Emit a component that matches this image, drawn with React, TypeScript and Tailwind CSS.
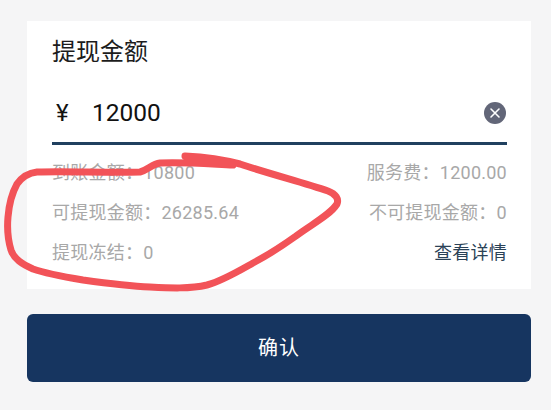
export default function App() {
  return (
    <div className="relative h-[410px] w-[551px] overflow-hidden bg-[#f5f5f6] pl-[27px] pr-[20px] pt-[21px] font-['Roboto','Noto_Sans_CJK_SC',sans-serif]">
      <section className="h-[268px] bg-white pl-[25px] pr-[24px] pt-[14px]">
        <h1 className="text-[24px] font-normal leading-[34px] text-[#1c1c1c]">提现金额</h1>
        <div className="mt-[15px] flex h-[61px] items-center border-b-[3px] border-[#20405f]">
          <span className="ml-[4px] w-[36px] text-[24px] leading-[34px] text-[#111]">¥</span>
          <span className="flex-1 text-[24.5px] leading-[34px] text-[#111]">12000</span>
          <span className="mr-[1px] flex h-[22px] w-[22px] items-center justify-center rounded-full bg-[#626678]">
            <svg width="12" height="12" viewBox="0 0 12 12" fill="none" stroke="white" strokeWidth="1.6" strokeLinecap="round">
              <path d="M2 2l8 8M10 2l-8 8" />
            </svg>
          </span>
        </div>
        <div className="mt-[7px] flex h-[40px] items-center justify-between text-[18px] tracking-[0.25px] text-[#a8a8a8]">
          <span>到账金额：10800</span>
          <span>服务费：1200.00</span>
        </div>
        <div className="flex h-[40px] items-center justify-between text-[18px] tracking-[0.25px] text-[#a8a8a8]">
          <span>可提现金额：26285.64</span>
          <span>不可提现金额：0</span>
        </div>
        <div className="flex h-[40px] items-center justify-between text-[18px] tracking-[0.25px] text-[#a8a8a8]">
          <span>提现冻结：0</span>
          <span className="text-[#2b4257]">查看详情</span>
        </div>
      </section>
      <button className="mt-[25px] flex h-[68px] w-full items-center justify-center rounded-[6px] bg-[#163560] text-[20px] tracking-[1px] text-white">
        确认
      </button>
      <svg className="absolute left-0 top-0" width="551" height="410" viewBox="0 0 551 410" fill="none">
        <path
          d="M185 156C205 157 225 160 240 164C270 174 305 183 328 191C336 194 339 199 337 204C330 215 312 224 296 236C282 246 268 255 253 263C237 272 222 281 207 285C190 289 170 288 150 287C128 286 105 283 83 280C65 277 47 274 33 269C22 264 14 259 11 250C8 240 7 228 8 217C9 205 12 193 17 184C22 177 28 173 37 172C70 171 105 173 140 172C148 170 152 164 160 163C185 162 210 164 233 165"
          stroke="#f25358"
          strokeWidth="7"
          strokeLinecap="round"
          strokeLinejoin="round"
        />
      </svg>
    </div>
  );
}
